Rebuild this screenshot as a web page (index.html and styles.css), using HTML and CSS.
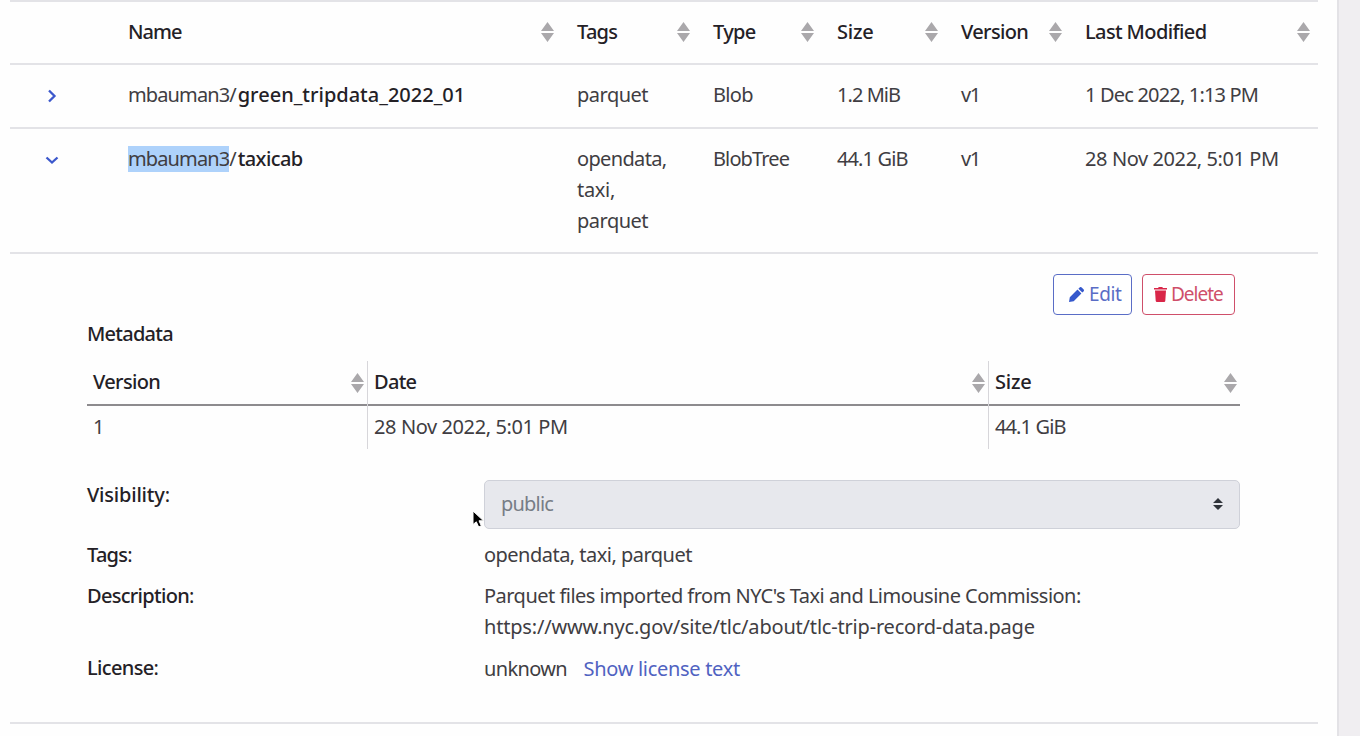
FILE: index.html
```html
<!DOCTYPE html>
<html lang="en">
<head>
<meta charset="utf-8">
<title>Datasets</title>
<link rel="stylesheet" href="styles.css">
</head>
<body>
<svg class="defs" width="0" height="0">
  <symbol id="sort" viewBox="0 0 13 20"><path d="M6.500 0 13 9H0zM0 11h13l-6.500 9z"/></symbol>
</svg>
<main class="panel">
  <div class="grid head">
    <div></div>
    <div class="th"><span class="t-name">Name</span><svg class="sort"><use href="#sort"/></svg></div>
    <div class="th"><span class="t-tags">Tags</span><svg class="sort"><use href="#sort"/></svg></div>
    <div class="th"><span class="t-type">Type</span><svg class="sort"><use href="#sort"/></svg></div>
    <div class="th"><span class="t-size">Size</span><svg class="sort"><use href="#sort"/></svg></div>
    <div class="th"><span class="t-version">Version</span><svg class="sort"><use href="#sort"/></svg></div>
    <div class="th"><span class="t-modified">Last Modified</span><svg class="sort"><use href="#sort"/></svg></div>
  </div>
  <div class="grid row">
    <div class="toggle"><svg width="14" height="14" viewBox="0 0 14 14"><path d="M4 1.500 9.500 7 4 12.500"/></svg></div>
    <div class="td"><span class="t-owner">mbauman3</span><span class="t-slash">/</span><b class="t-green">green_tripdata_2022_01</b></div>
    <div class="td"><span class="t-parquet">parquet</span></div>
    <div class="td"><span class="t-blob">Blob</span></div>
    <div class="td"><span class="t-mib">1.2 MiB</span></div>
    <div class="td"><span class="t-v1">v1</span></div>
    <div class="td"><span class="t-date1">1 Dec 2022, 1:13 PM</span></div>
  </div>
  <div class="grid row tall">
    <div class="toggle"><svg width="14" height="14" viewBox="0 0 14 14"><path d="M1.500 4.500 7 9.500l5.500-5"/></svg></div>
    <div class="td"><span class="t-owner selected">mbauman3</span><span class="t-slash">/</span><b class="t-taxicab">taxicab</b></div>
    <div class="td"><span class="t-opendata">opendata,</span><br><span class="t-taxi">taxi,</span><br><span class="t-parquet">parquet</span></div>
    <div class="td"><span class="t-tree">BlobTree</span></div>
    <div class="td"><span class="t-gib">44.1 GiB</span></div>
    <div class="td"><span class="t-v1">v1</span></div>
    <div class="td"><span class="t-date2">28 Nov 2022, 5:01 PM</span></div>
  </div>
  <section class="detail">
    <div class="actions">
      <button class="btn edit"><svg width="15" height="15" viewBox="0 0 15 15"><path d="M0 15l.8-4.700 7.700-7.700 3.900 3.900-7.700 7.700zM9.400 1.700 10.600.5a1.500 1.500 0 0 1 2.100 0l1.800 1.800a1.500 1.500 0 0 1 0 2.100l-1.200 1.200z"/></svg><span class="t-edit">Edit</span></button>
      <button class="btn delete"><svg width="13" height="15" viewBox="0 0 13 15"><path d="M0 1h4l.8-1h3.400L9 1h4v1.600H0zM1 3.400h11l-.7 10.300a1.300 1.300 0 0 1-1.300 1.300H3a1.300 1.300 0 0 1-1.300-1.300z"/></svg><span class="t-delete">Delete</span></button>
    </div>
    <h2 class="title"><span class="t-metadata">Metadata</span></h2>
    <div class="meta">
      <div class="mh"><span class="t-version">Version</span><svg class="sort"><use href="#sort"/></svg></div>
      <div class="mh"><span class="t-dateh">Date</span><svg class="sort"><use href="#sort"/></svg></div>
      <div class="mh"><span class="t-size">Size</span><svg class="sort"><use href="#sort"/></svg></div>
      <div class="md"><span>1</span></div>
      <div class="md"><span class="t-date2">28 Nov 2022, 5:01 PM</span></div>
      <div class="md"><span class="t-gib">44.1 GiB</span></div>
    </div>
    <dl class="props">
      <dt><span class="t-visibility">Visibility</span><i>:</i></dt>
      <dd><div class="select"><span class="t-public">public</span><svg width="10" height="12" viewBox="0 0 10 12"><path d="M5 0l5 5H0zM0 7h10l-5 5z"/></svg></div></dd>
      <dt><span class="t-tags">Tags</span><i>:</i></dt>
      <dd><span class="t-list">opendata, taxi, parquet</span></dd>
      <dt><span class="t-description">Description</span><i>:</i></dt>
      <dd><span class="t-desc1">Parquet files imported from NYC's Taxi and Limousine Commission:</span><br><span class="t-desc2">https://www.nyc.gov/site/tlc/about/tlc-trip-record-data.page</span></dd>
      <dt><span class="t-license">License</span><i>:</i></dt>
      <dd class="license"><span class="t-unknown">unknown</span><a class="t-show">Show license text</a></dd>
    </dl>
  </section>
  <svg class="cursor" width="13" height="19" viewBox="0 0 13 19"><path d="M1 1v13.500l3.300-2.700 2.400 5.200 2.600-1.200L7 10.800h4.500z"/></svg>
</main>
</body>
</html>
```
FILE: styles.css
```css
* { box-sizing: border-box; }
body {
  margin: 0;
  height: 736px;
  overflow: hidden;
  background: #f0eef1;
  color: #403d42;
  font: 20px/31px "Noto Sans", "Open Sans", sans-serif;
}
.defs { position: absolute; }
.panel {
  position: relative;
  width: 1339px;
  height: 736px;
  padding: 0 19px 0 10px;
  background: #fefefe;
  border-right: 2px solid #e3e2e6;
}
.grid {
  display: grid;
  grid-template-columns: 103px 449px 136px 124px 124px 124px 248px;
  border-bottom: 2px solid #e3e3e7;
}
.head { height: 65px; border-top: 2px solid #e3e3e7; font-weight: 500; color: #242126; }
.row { height: 64px; }
.tall { height: 125px; }
.th { display: flex; align-items: center; justify-content: space-between; padding: 0 8px 2px 15px; white-space: nowrap; }
.td { padding: 14px 0 0 15px; white-space: nowrap; }
.sort { width: 13px; height: 20px; margin-top: 1px; fill: #aaa8ab; flex: none; }
.toggle { padding: 24px 0 0 35px; line-height: 0; }
.toggle path { fill: none; stroke: #3c58cc; stroke-width: 2.300; }
.td b { font-weight: 500; color: #242126; }
.selected {
  background: linear-gradient(#aed2fb, #aed2fb) 0 100% / 100% 26px no-repeat;
}
.detail { height: 470px; padding: 20px 78px 0 77px; border-bottom: 2px solid #e3e3e7; }
.actions { display: flex; justify-content: flex-end; gap: 10px; padding-right: 5px; }
.btn {
  display: flex;
  align-items: center;
  height: 41px;
  padding: 0;
  border: 1.500px solid;
  border-radius: 4px;
  background: #fff;
  font: inherit;
  font-size: 19px;
}
.btn svg { fill: currentColor; }
.edit { width: 79px; padding-left: 15px; gap: 5px; color: #5a6dc6; }
.edit svg { fill: #3558cc; }
.delete { width: 93px; padding-left: 11px; gap: 4px; color: #cf4f6a; }
.delete svg { fill: #d92648; }
.title { margin: 3px 0 12px; font: inherit; font-weight: 500; color: #242126; }
.meta { display: grid; grid-template-columns: 281px 621px 251px; white-space: nowrap; }
.mh {
  display: flex;
  align-items: center;
  justify-content: space-between;
  height: 45px;
  padding: 0 4px 3px 6px;
  border-bottom: 2px solid #8d8b8e;
  font-weight: 500;
  color: #242126;
}
.mh:nth-child(3) { padding-right: 3px; }
.mh .sort { margin-top: 3px; }
.md { height: 43px; padding: 5px 0 0 6px; }
.mh + .mh, .md + .md { box-shadow: -1px 0 #d7d6da; }
.props {
  display: grid;
  grid-template-columns: 397px 756px;
  row-gap: 10px;
  margin: 31px 0 0;
  white-space: nowrap;
}
dt { font-weight: 500; color: #242126; }
dt:first-child { margin-top: -1px; }
dt i { font-style: normal; font-weight: 400; }
dd { margin: 0; }
.select {
  display: flex;
  align-items: center;
  justify-content: space-between;
  height: 49px;
  padding: 0 16px 2px 16px;
  border: 1px solid #cfd1d9;
  border-radius: 5px;
  background: #e7e8ed;
  color: #777d86;
}
.select svg { fill: #30343b; }
.license { display: flex; gap: 16.500px; padding-top: 1px; }
.license a { color: #5062c1; }
.cursor { position: absolute; left: 472px; top: 510px; stroke: #fff; stroke-width: 1; }

/* Tracking of each label */
.t-name { letter-spacing: -1px; }
.t-tags { letter-spacing: -0.75px; }
.t-type { letter-spacing: -0.7px; }
.t-size { letter-spacing: -0.2px; }
.t-version { letter-spacing: -0.65px; }
.t-modified { letter-spacing: -0.62px; }
.t-owner { letter-spacing: -0.88px; }
.t-slash { letter-spacing: 1px; }
.t-green { letter-spacing: 0; }
.t-taxicab { letter-spacing: -0.6px; }
.t-parquet { letter-spacing: -0.5px; }
.t-blob { letter-spacing: -0.65px; }
.t-mib { letter-spacing: -0.95px; }
.t-v1 { letter-spacing: -1.5px; }
.t-date1 { letter-spacing: -0.82px; }
.t-opendata { letter-spacing: -0.65px; }
.t-taxi { letter-spacing: -0.3px; }
.t-tree { letter-spacing: -0.88px; }
.t-gib { letter-spacing: -0.88px; }
.t-date2 { letter-spacing: -0.4px; }
.t-edit { letter-spacing: -0.4px; }
.t-delete { letter-spacing: -1px; }
.t-metadata { letter-spacing: -0.75px; }
.t-dateh { letter-spacing: -0.7px; }
.t-visibility { letter-spacing: -0.2px; }
.t-description { letter-spacing: -0.7px; }
.t-license { letter-spacing: -0.65px; }
.t-public { letter-spacing: -0.8px; }
.t-list { letter-spacing: -0.52px; }
.t-desc1 { letter-spacing: -0.52px; }
.t-desc2 { letter-spacing: -0.19px; }
.t-unknown { letter-spacing: -0.65px; }
.t-show { letter-spacing: -0.3px; }
```
